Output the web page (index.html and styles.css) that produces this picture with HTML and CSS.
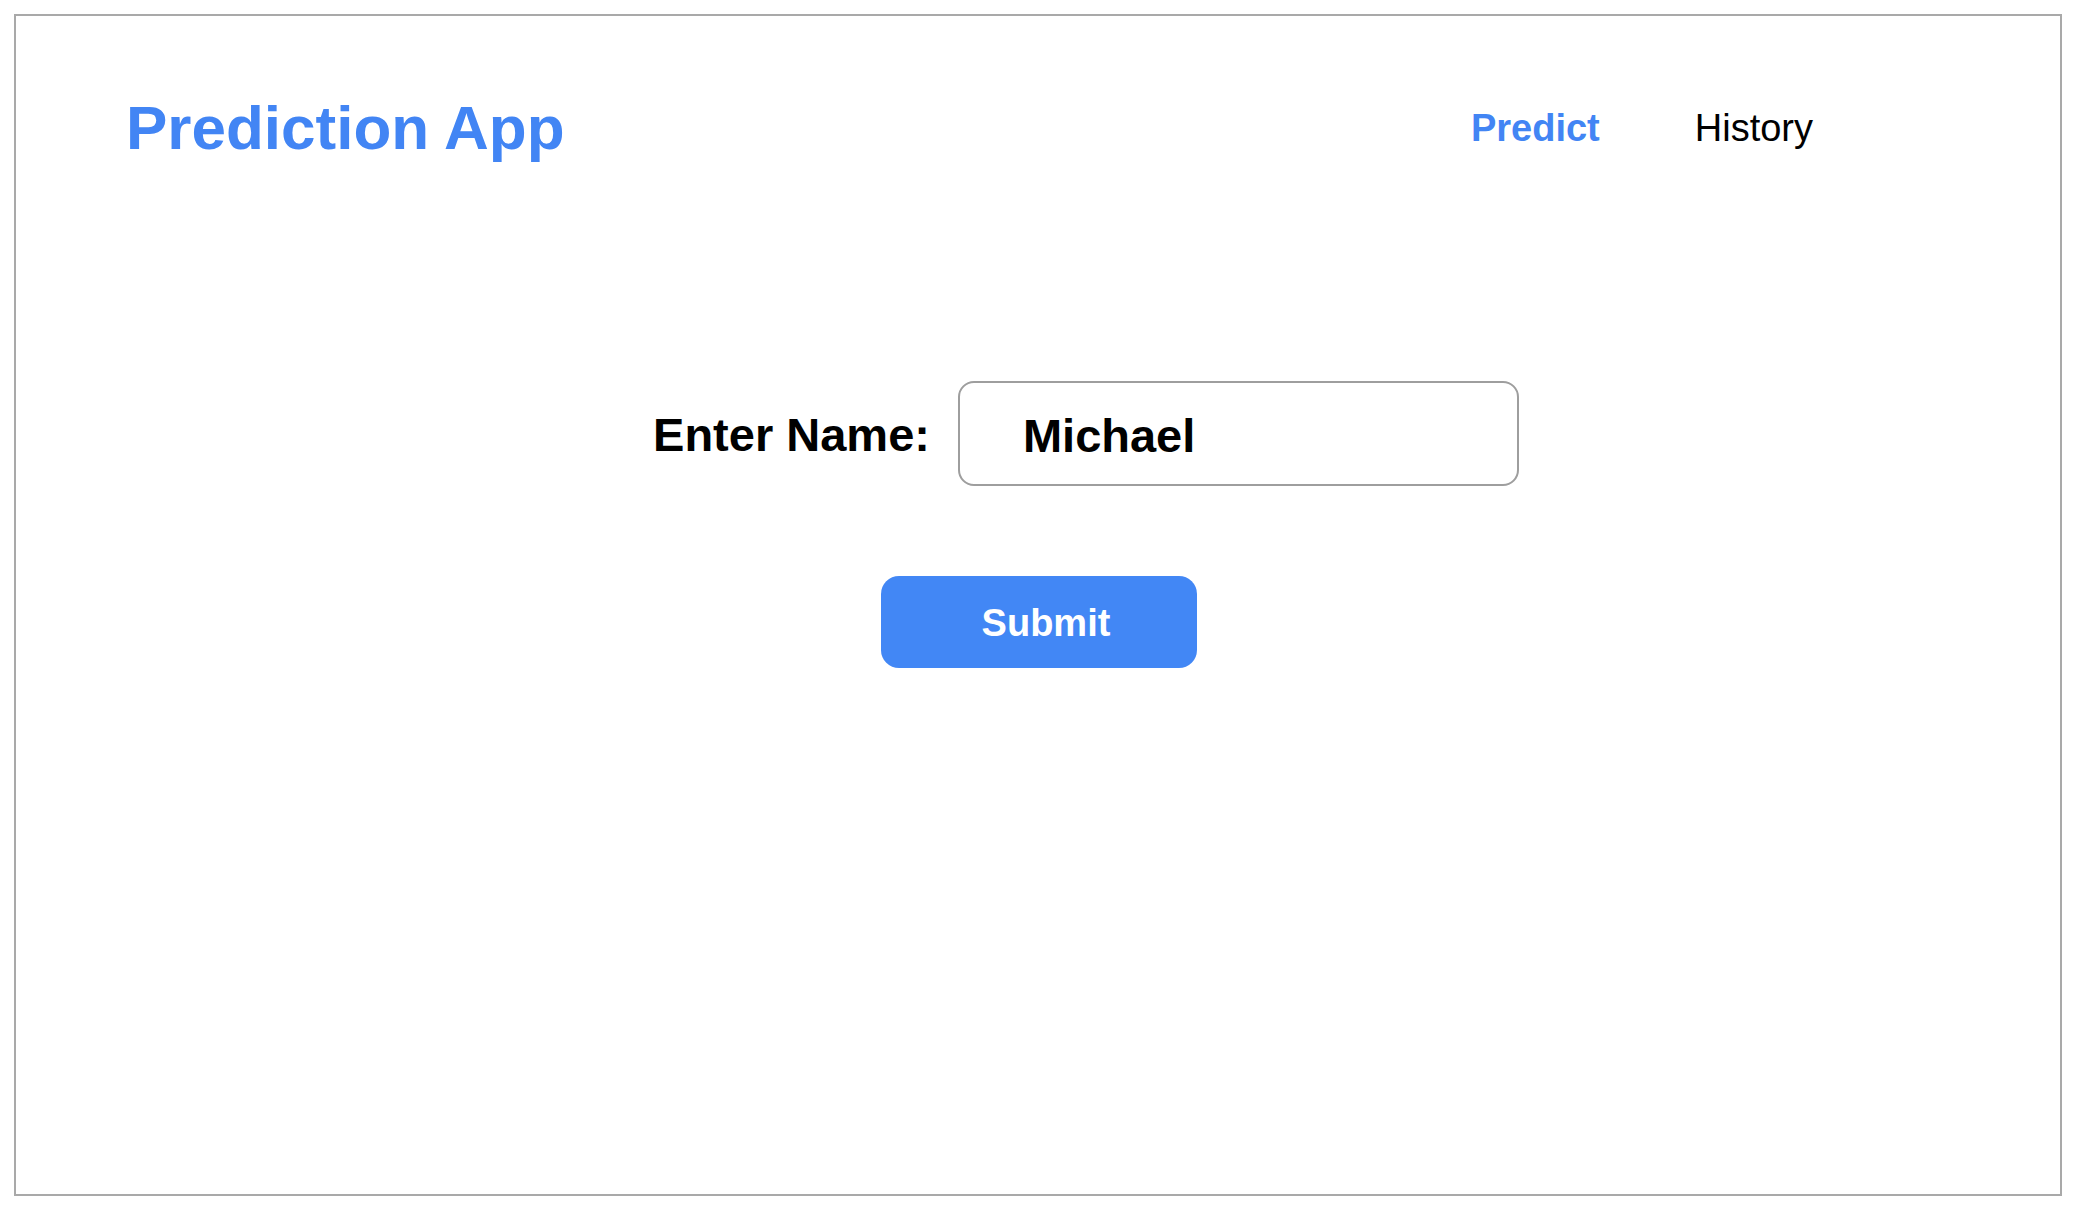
FILE: index.html
```html
<!DOCTYPE html>
<html lang="en">
<head>
<meta charset="utf-8">
<title>Prediction App</title>
<link rel="stylesheet" href="styles.css">
</head>
<body>
<div class="frame">
  <header class="header">
    <h1 class="title">Prediction App</h1>
    <nav class="nav">
      <a class="nav-link active" href="#">Predict</a>
      <a class="nav-link" href="#">History</a>
    </nav>
  </header>
  <main class="main">
    <form class="form">
      <div class="row">
        <label class="label" for="name">Enter Name:</label>
        <input class="input" id="name" type="text" value="Michael">
      </div>
      <button class="submit" type="button">Submit</button>
    </form>
  </main>
</div>
</body>
</html>
```

FILE: styles.css
```css
html, body {
  margin: 0;
  padding: 0;
  background: #ffffff;
}
body {
  font-family: "Liberation Sans", Arial, sans-serif;
  color: #000;
}
.frame {
  box-sizing: border-box;
  margin: 14px 0 0 14px;
  width: 2048px;
  height: 1182px;
  border: 2px solid #a9a9a9;
  background: #fff;
}
.header {
  height: 222px;
  display: flex;
  align-items: center;
  justify-content: space-between;
  padding: 2px 247px 0 110px;
  box-sizing: border-box;
}
.title {
  margin: 0;
  font-size: 62px;
  line-height: 1;
  font-weight: 700;
  color: #4285f4;
}
.nav {
  display: flex;
  gap: 95px;
  align-items: center;
}
.nav-link {
  font-size: 38px;
  line-height: 1;
  color: #000;
  text-decoration: none;
}
.nav-link.active {
  color: #4285f4;
  font-weight: 700;
}
.main {
  display: flex;
  justify-content: center;
}
.form {
  display: flex;
  flex-direction: column;
  align-items: center;
  margin-top: 143px;
}
.row {
  display: flex;
  align-items: center;
  gap: 28px;
  margin-left: 96px;
}
.label {
  font-size: 47px;
  font-weight: 700;
  line-height: 1;
  padding-top: 2px;
}
.input {
  box-sizing: border-box;
  width: 561px;
  height: 105px;
  border: 2px solid #9e9e9e;
  border-radius: 16px;
  padding: 4px 0 0 63px;
  font-family: "Liberation Sans", Arial, sans-serif;
  font-size: 47px;
  font-weight: 700;
  color: #000;
  background: #fff;
  outline: none;
}
.submit {
  box-sizing: border-box;
  margin-top: 90px;
  margin-left: 2px;
  width: 316px;
  height: 92px;
  border: none;
  border-radius: 18px;
  background: #4287f5;
  color: #fff;
  font-family: "Liberation Sans", Arial, sans-serif;
  font-size: 38px;
  font-weight: 700;
  padding: 2px 0 0 14px;
  cursor: pointer;
}
```
